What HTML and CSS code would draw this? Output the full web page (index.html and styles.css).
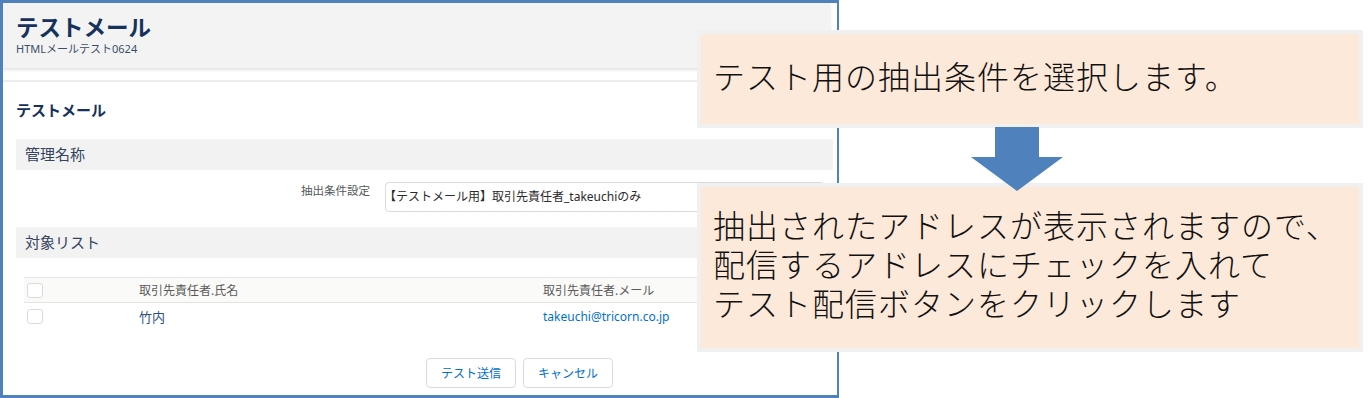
FILE: index.html
```html
<!DOCTYPE html>
<html lang="ja">
<head>
<meta charset="utf-8">
<title>テストメール</title>
<link rel="stylesheet" href="styles.css">
</head>
<body>
<div class="stage">
  <div class="panel">
    <header class="page-head">
      <h1 class="page-title">テストメール</h1>
      <p class="page-sub">HTMLメールテスト0624</p>
    </header>
    <main class="card">
      <h2 class="card-title">テストメール</h2>
      <div class="bar">管理名称</div>
      <div class="form-row">
        <label class="form-label">抽出条件設定</label>
        <div class="select">【テストメール用】取引先責任者_takeuchiのみ</div>
      </div>
      <div class="bar">対象リスト</div>
      <div class="grid">
        <div class="cell head"><span class="check"></span></div>
        <div class="cell head">取引先責任者.氏名</div>
        <div class="cell head">取引先責任者.メール</div>
        <div class="cell"><span class="check"></span></div>
        <div class="cell name">竹内</div>
        <div class="cell mail">takeuchi@tricorn.co.jp</div>
      </div>
      <div class="actions">
        <button class="btn">テスト送信</button>
        <button class="btn">キャンセル</button>
      </div>
    </main>
  </div>

  <div class="callout callout-one"><span class="line">テスト用の抽出条件を選択します。</span></div>
  <div class="callout callout-two">
    <span class="line">抽出されたアドレスが表示されますので、</span>
    <span class="line">配信するアドレスにチェックを入れて</span>
    <span class="line">テスト配信ボタンをクリックします</span>
  </div>
  <svg class="arrow" width="92" height="64" viewBox="0 0 92 64">
    <path d="M24 0 H68 V30 H92 L46 64 L0 30 H24 Z" fill="#4f81bd"/>
  </svg>
</div>
</body>
</html>
```

FILE: styles.css
```css
* { box-sizing: border-box; }
html, body { margin: 0; padding: 0; background: #fff; }
body { width: 1368px; height: 398px; overflow: hidden; }

.stage {
  position: relative;
  width: 1368px;
  height: 398px;
  font-family: "Noto Sans", "Noto Sans CJK JP", sans-serif;
}

.panel {
  width: 839px;
  height: 398px;
  border: 3px solid #4f81bd;
  border-right-width: 2px;
  background: #fff;
  overflow: hidden;
}

.page-head {
  height: 65px;
  margin-right: 7px;
  padding: 12px 13px 0;
  background: #f3f3f3;
  box-shadow: 0 2px 3px rgba(0, 0, 0, 0.12);
}
.page-title {
  margin: 0;
  font-size: 22.5px;
  line-height: 26px;
  font-weight: 700;
  color: #16325c;
}
.page-sub {
  margin: 1px 0 0;
  font-size: 11px;
  line-height: 14px;
  color: #3b4d6b;
}

.card {
  margin-top: 12px;
  margin-right: 4px;
  border-top: 2px solid #ededed;
  padding-left: 13px;
}
.card-title {
  margin: 18px 0 0;
  font-size: 15px;
  line-height: 20px;
  font-weight: 700;
  color: #16325c;
}

.bar {
  margin-top: 19px;
  height: 31px;
  line-height: 31px;
  padding-left: 9px;
  background: #f3f2f2;
  font-size: 15px;
  color: #34445f;
}
.form-row + .bar { margin-top: 0; }

.form-row {
  display: flex;
  align-items: flex-start;
  gap: 15px;
  height: 57px;
  padding-top: 12px;
}
.form-label {
  width: 354px;
  text-align: right;
  font-size: 11.5px;
  line-height: 18px;
  color: #54585c;
}
.select {
  flex: 1;
  margin-right: 8px;
  height: 30px;
  line-height: 28px;
  border: 1px solid #dddbda;
  border-radius: 4px;
  padding-left: 0;
  text-indent: -2px;
  font-size: 12px;
  color: #2b2b2b;
  background: #fff;
}

.grid {
  margin-top: 19px;
  margin-left: 8px;
  display: grid;
  grid-template-columns: 115px 404px 1fr;
}
.cell {
  display: flex;
  align-items: center;
  height: 27px;
  font-size: 12px;
}
.cell.head {
  height: 26px;
  background: #fafaf9;
  border-top: 1px solid #e8e8e8;
  border-bottom: 1px solid #e3e3e3;
  color: #5a5a5a;
}
.check {
  display: block;
  width: 16px;
  height: 15px;
  margin-left: 3px;
  border: 1px solid #dddbda;
  border-radius: 3px;
  background: #fff;
}
.name { font-size: 13px; color: #2d5086; }
.mail { color: #0070d2; }

.actions {
  display: flex;
  gap: 7px;
  margin-top: 28px;
  padding-left: 410px;
}
.btn {
  width: 90px;
  height: 30px;
  padding: 0;
  border: 1px solid #dddbda;
  border-radius: 4px;
  background: #fff;
  font-family: "Noto Sans", "Noto Sans CJK JP", sans-serif;
  font-size: 12px;
  color: #0070d2;
}

.callout {
  position: absolute;
  left: 697px;
  width: 666px;
  border: 4px solid #f0f0f0;
  background: #fde9d9;
  font-family: "Noto Sans CJK JP", sans-serif;
  font-weight: 300;
  font-size: 32px;
  letter-spacing: 1px;
  color: #111;
  padding-left: 12px;
  white-space: nowrap;
}
.callout .line {
  display: block;
}
.callout-one {
  top: 30px;
  height: 98px;
  padding-top: 21px;
  line-height: 40px;
}
.callout-two {
  top: 183px;
  height: 169px;
  padding-top: 18px;
  line-height: 39px;
}
.arrow {
  position: absolute;
  left: 971px;
  top: 127px;
}
```
